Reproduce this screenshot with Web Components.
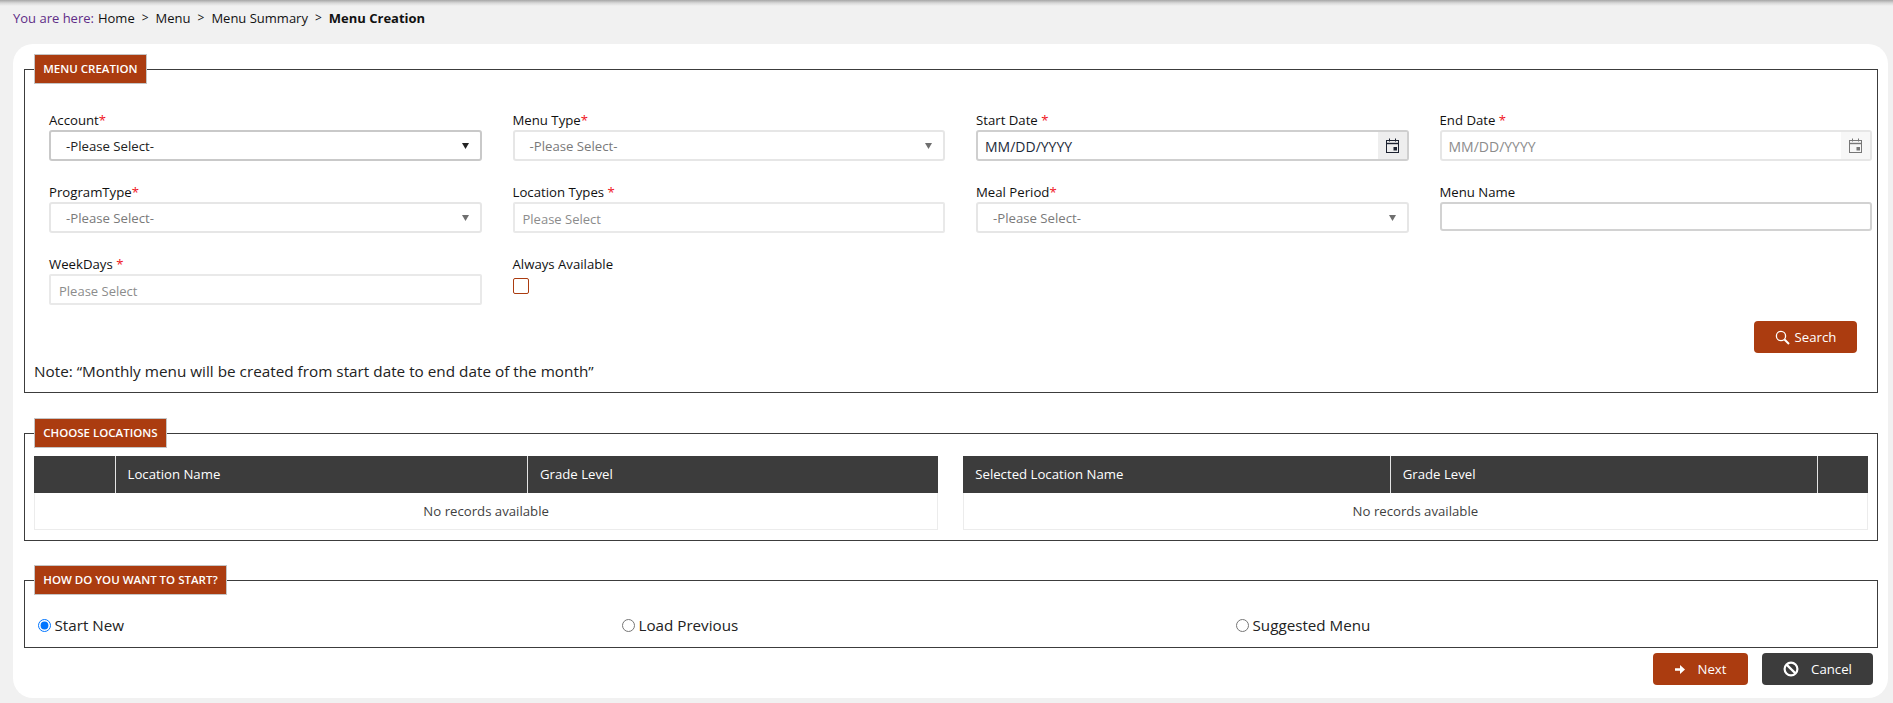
<!DOCTYPE html>
<html lang="en">
<head>
<meta charset="utf-8">
<title>Menu Creation</title>
<style>
  html, body { margin: 0; height: 100%; overflow: hidden; }
  body { background: #f1f1f1; color: #1d1d1d; font: 13.2px/20px "Open Sans", "Noto Sans", sans-serif; }
</style>
</head>
<body>
<app-breadcrumb></app-breadcrumb>
<app-card>
  <form-panel title="MENU CREATION" id="creation">
    <form-grid>
      <form-field label="Account" star="tight"><select-box active>-Please Select-</select-box></form-field>
      <form-field label="Menu Type" star="tight"><select-box>-Please Select-</select-box></form-field>
      <form-field label="Start Date" star="space"><date-box active></date-box></form-field>
      <form-field label="End Date" star="space"><date-box></date-box></form-field>
      <form-field label="ProgramType" star="tight"><select-box>-Please Select-</select-box></form-field>
      <form-field label="Location Types" star="space"><text-box placeholder="Please Select"></text-box></form-field>
      <form-field label="Meal Period" star="tight"><select-box>-Please Select-</select-box></form-field>
      <form-field label="Menu Name"><text-box active></text-box></form-field>
      <form-field label="WeekDays" star="space"><text-box placeholder="Please Select"></text-box></form-field>
      <form-field label="Always Available"><check-box></check-box></form-field>
    </form-grid>
    <search-row><app-button icon="search" color="rust" style="--w:103px;--gap:5px">Search</app-button></search-row>
    <note-line>Note: “Monthly menu will be created from start date to end date of the month”</note-line>
  </form-panel>

  <form-panel title="CHOOSE LOCATIONS" id="locations" style="margin-bottom:24px">
    <grid-pair>
      <data-grid cols="81.5px 412.5px 1fr" headers="|Location Name|Grade Level"></data-grid>
      <data-grid cols="427.5px 427px 1fr" headers="Selected Location Name|Grade Level|"></data-grid>
    </grid-pair>
  </form-panel>

  <form-panel title="HOW DO YOU WANT TO START?" id="start">
    <radio-row>
      <radio-option name="start" checked style="--w:584px">Start New</radio-option>
      <radio-option name="start" style="--w:614px">Load Previous</radio-option>
      <radio-option name="start">Suggested Menu</radio-option>
    </radio-row>
  </form-panel>

  <action-row>
    <app-button icon="next" color="rust" style="--w:95px;--gap:13px">Next</app-button>
    <app-button icon="ban" color="dark" style="--w:111px;--gap:12px">Cancel</app-button>
  </action-row>
</app-card>

<script>
  // Small helper, every element below is just a shadow root with its own style
  class Base extends HTMLElement {
    render(html) {
      if (!this.shadowRoot) this.attachShadow({ mode: "open" });
      this.shadowRoot.innerHTML = html;
    }
  }

  class AppBreadcrumb extends Base {
    connectedCallback() {
      this.render(`
        <style>
          :host { display: flex; align-items: center; height: 44px; padding: 0 0 8px 13px; box-sizing: border-box;
                  background: linear-gradient(#a6a6a6, #d8d8d8 3px, #f1f1f1 6px); font-size: 13px; color: #111; }
          .here { color: #5f2d87; margin-right: 4px; }
          .sep { margin: 0 7px; font-size: 12px; }
          b { font-weight: 700; }
        </style>
        <span class="here">You are here:</span><span>Home</span><span class="sep">&gt;</span><span>Menu</span><span class="sep">&gt;</span><span>Menu Summary</span><span class="sep">&gt;</span><b>Menu Creation</b>
      `);
    }
  }

  class AppCard extends Base {
    connectedCallback() {
      this.render(`
        <style>
          :host { display: block; height: 654px; margin: 0 5px 0 13px; padding: 10px 10px 0 10.5px; box-sizing: border-box;
                  background: #fff; border-radius: 20px; }
        </style>
        <slot></slot>
      `);
    }
  }

  class FormPanel extends Base {
    connectedCallback() {
      this.render(`
        <style>
          :host { display: block; margin-bottom: 25px; }
          :host(:last-of-type) { margin-bottom: 0; }
          fieldset { margin: 0; padding: 0 9.5px; border: 1px solid #3c3c3c; min-width: 0; }
          legend { display: block; box-sizing: border-box; height: 30px; padding: 0 8.25px; background: #ab3c10; border: 1px solid #c4c4c4;
                   color: #fff; font-size: 11.5px; font-weight: 600; line-height: 28px; white-space: nowrap; }
        </style>
        <fieldset><legend>${this.getAttribute("title")}</legend><slot></slot></fieldset>
      `);
    }
  }

  class FormGrid extends Base {
    connectedCallback() {
      this.render(`
        <style>
          :host { display: grid; grid-template-columns: repeat(4, 1fr); column-gap: 31px; row-gap: 21px;
                  padding: 26px 0 0 15px; margin-right: -4.5px; }
        </style>
        <slot></slot>
      `);
    }
  }

  class FormField extends Base {
    connectedCallback() {
      const star = this.getAttribute("star");
      const mark = star ? `<i>${star === "space" ? " " : ""}*</i>` : "";
      this.render(`
        <style>
          :host { display: block; min-width: 0; }
          label { display: block; height: 20px; line-height: 20px; color: #111; white-space: pre; }
          i { font-style: normal; color: #f0141e; }
        </style>
        <label>${this.getAttribute("label")}${mark}</label>
        <slot></slot>
      `);
    }
  }

  class SelectBox extends Base {
    connectedCallback() {
      this.render(`
        <style>
          :host { display: flex; align-items: center; justify-content: space-between; box-sizing: border-box; height: 31px;
                  padding: 0 11px 0 15px; border: 2px solid #e6e6e6; border-radius: 3px; color: #7a7a7a; background: #fff; }
          :host([active]) { border-color: #c9c9c9; color: #222; }
          svg { fill: #6f6f6f; }
          :host([active]) svg { fill: #222; }
        </style>
        <span><slot></slot></span>
        <svg width="7" height="6" viewBox="0 0 7 6"><path d="M0 0h7L3.5 6z"/></svg>
      `);
    }
  }

  class TextBox extends Base {
    connectedCallback() {
      const hint = this.getAttribute("placeholder") || "";
      this.render(`
        <style>
          :host { display: flex; align-items: center; box-sizing: border-box; height: 31px; padding: 2px 8px 0;
                  border: 2px solid #e9e9e9; border-radius: 2px; color: #8c8c8c; font-size: 13px; background: #fff; }
          :host([active]) { border-color: #d2d2d2; height: 29px; border-radius: 3px; }
        </style>
        <span>${hint}</span>
      `);
    }
  }

  class DateBox extends Base {
    connectedCallback() {
      this.render(`
        <style>
          :host { display: flex; box-sizing: border-box; height: 31px; border: 2px solid #e6e6e6; border-radius: 3px;
                  color: #8c8c8c; font-size: 14px; background: #fff; --ink: #777; --addon: #f7f7f7; }
          :host([active]) { border-color: #cfcfcf; color: #1c2a3a; --ink: #1c2230; --addon: #eee; }
          span { flex: 1; padding-left: 7px; line-height: 29px; }
          div { display: flex; align-items: center; justify-content: center; width: 29px; background: var(--addon); }
        </style>
        <span>MM/DD/YYYY</span>
        <div>
          <svg width="15" height="15" viewBox="0 0 15 15" fill="none" stroke="var(--ink)">
            <rect x="1.5" y="2.5" width="12" height="12"/>
            <path d="M1.5 5.5h12" stroke-width="1.4"/>
            <path d="M4.5 .5v3M10.5 .5v3"/>
            <rect x="8.5" y="9" width="3.5" height="3.5" fill="var(--ink)" stroke="none"/>
          </svg>
        </div>
      `);
    }
  }

  class CheckBox extends Base {
    connectedCallback() {
      this.render(`
        <style>
          :host { display: block; box-sizing: border-box; width: 16px; height: 16px; margin-top: 4px;
                  border: 1px solid #ab3c10; border-radius: 2px; background: #fff; }
        </style>
      `);
    }
  }

  class SearchRow extends Base {
    connectedCallback() {
      this.render(`
        <style>
          :host { display: flex; justify-content: flex-end; padding: 16px 10.5px 0 0; }
        </style>
        <slot></slot>
      `);
    }
  }

  class NoteLine extends Base {
    connectedCallback() {
      this.render(`
        <style>
          :host { display: block; margin-top: 7px; padding-bottom: 10px; font-size: 15.3px; line-height: 22px; color: #222; }
        </style>
        <slot></slot>
      `);
    }
  }

  class GridPair extends Base {
    connectedCallback() {
      this.render(`
        <style>
          :host { display: grid; grid-template-columns: 1fr 1fr; column-gap: 25px; padding: 8px 0 10px; }
        </style>
        <slot></slot>
      `);
    }
  }

  class DataGrid extends Base {
    connectedCallback() {
      const cols = this.getAttribute("cols");
      const heads = this.getAttribute("headers").split("|");
      const cells = heads.map((h) => `<div class="th">${h}</div>`).join("");
      this.render(`
        <style>
          :host { display: block; min-width: 0; }
          .head { display: grid; grid-template-columns: ${cols}; height: 37px; background: #3c3c3c; color: #fff; }
          .th { padding-left: 12px; line-height: 36px; border-right: 1px solid #e4e4e4; }
          .th:last-child { border-right: 0; }
          .empty { height: 37px; box-sizing: border-box; line-height: 36px; text-align: center; color: #3f3f3f;
                   border: 1px solid #ececec; border-top: 0; }
        </style>
        <div class="head">${cells}</div>
        <div class="empty">No records available</div>
      `);
    }
  }

  class RadioRow extends Base {
    connectedCallback() {
      this.render(`
        <style>
          :host { display: flex; align-items: center; height: 52px; padding: 8px 0 0 4px; box-sizing: border-box; margin-left: -0.5px; }
        </style>
        <slot></slot>
      `);
    }
  }

  class RadioOption extends Base {
    connectedCallback() {
      const checked = this.hasAttribute("checked") ? "checked" : "";
      this.render(`
        <style>
          :host { display: flex; align-items: center; width: var(--w, auto); font-size: 15.2px; color: #222; }
          input { width: 13px; height: 13px; margin: 0 4px 0 0; flex: none; }
        </style>
        <input type="radio" name="${this.getAttribute("name")}" ${checked}><slot></slot>
      `);
    }
  }

  const BUTTON_ICONS = {
    search: `<svg width="15" height="15" viewBox="0 0 15 15" fill="none" stroke="#fff"><circle cx="6" cy="6" r="4.6" stroke-width="1.3"/><path d="M9.5 9.5l4.5 4.5" stroke-width="2"/></svg>`,
    next: `<svg width="10" height="9" viewBox="0 0 10 9" fill="#fff"><path d="M0 3.2h5V0l5 4.5L5 9V5.8H0z"/></svg>`,
    ban: `<svg width="16" height="16" viewBox="0 0 16 16" fill="none" stroke="#fff" stroke-width="2.2"><circle cx="8" cy="8" r="6.4"/><path d="M3.6 3.6l8.8 8.8"/></svg>`,
  };

  class AppButton extends Base {
    connectedCallback() {
      this.render(`
        <style>
          :host { display: flex; align-items: center; justify-content: center; gap: var(--gap, 5px); box-sizing: border-box;
                  width: var(--w); height: 32px; border-radius: 4px; color: #fff; font-size: 13.2px; cursor: pointer; }
          :host([color="rust"]) { background: #ab3c10; }
          :host([color="dark"]) { background: #3c3c3c; }
          svg { display: block; }
        </style>
        ${BUTTON_ICONS[this.getAttribute("icon")]}<span><slot></slot></span>
      `);
    }
  }

  class ActionRow extends Base {
    connectedCallback() {
      this.render(`
        <style>
          :host { display: flex; justify-content: flex-end; gap: 14px; padding: 5px 5px 0 0; }
        </style>
        <slot></slot>
      `);
    }
  }

  customElements.define("app-breadcrumb", AppBreadcrumb);
  customElements.define("app-card", AppCard);
  customElements.define("form-panel", FormPanel);
  customElements.define("form-grid", FormGrid);
  customElements.define("form-field", FormField);
  customElements.define("select-box", SelectBox);
  customElements.define("text-box", TextBox);
  customElements.define("date-box", DateBox);
  customElements.define("check-box", CheckBox);
  customElements.define("search-row", SearchRow);
  customElements.define("note-line", NoteLine);
  customElements.define("grid-pair", GridPair);
  customElements.define("data-grid", DataGrid);
  customElements.define("radio-row", RadioRow);
  customElements.define("radio-option", RadioOption);
  customElements.define("app-button", AppButton);
  customElements.define("action-row", ActionRow);
</script>
</body>
</html>
